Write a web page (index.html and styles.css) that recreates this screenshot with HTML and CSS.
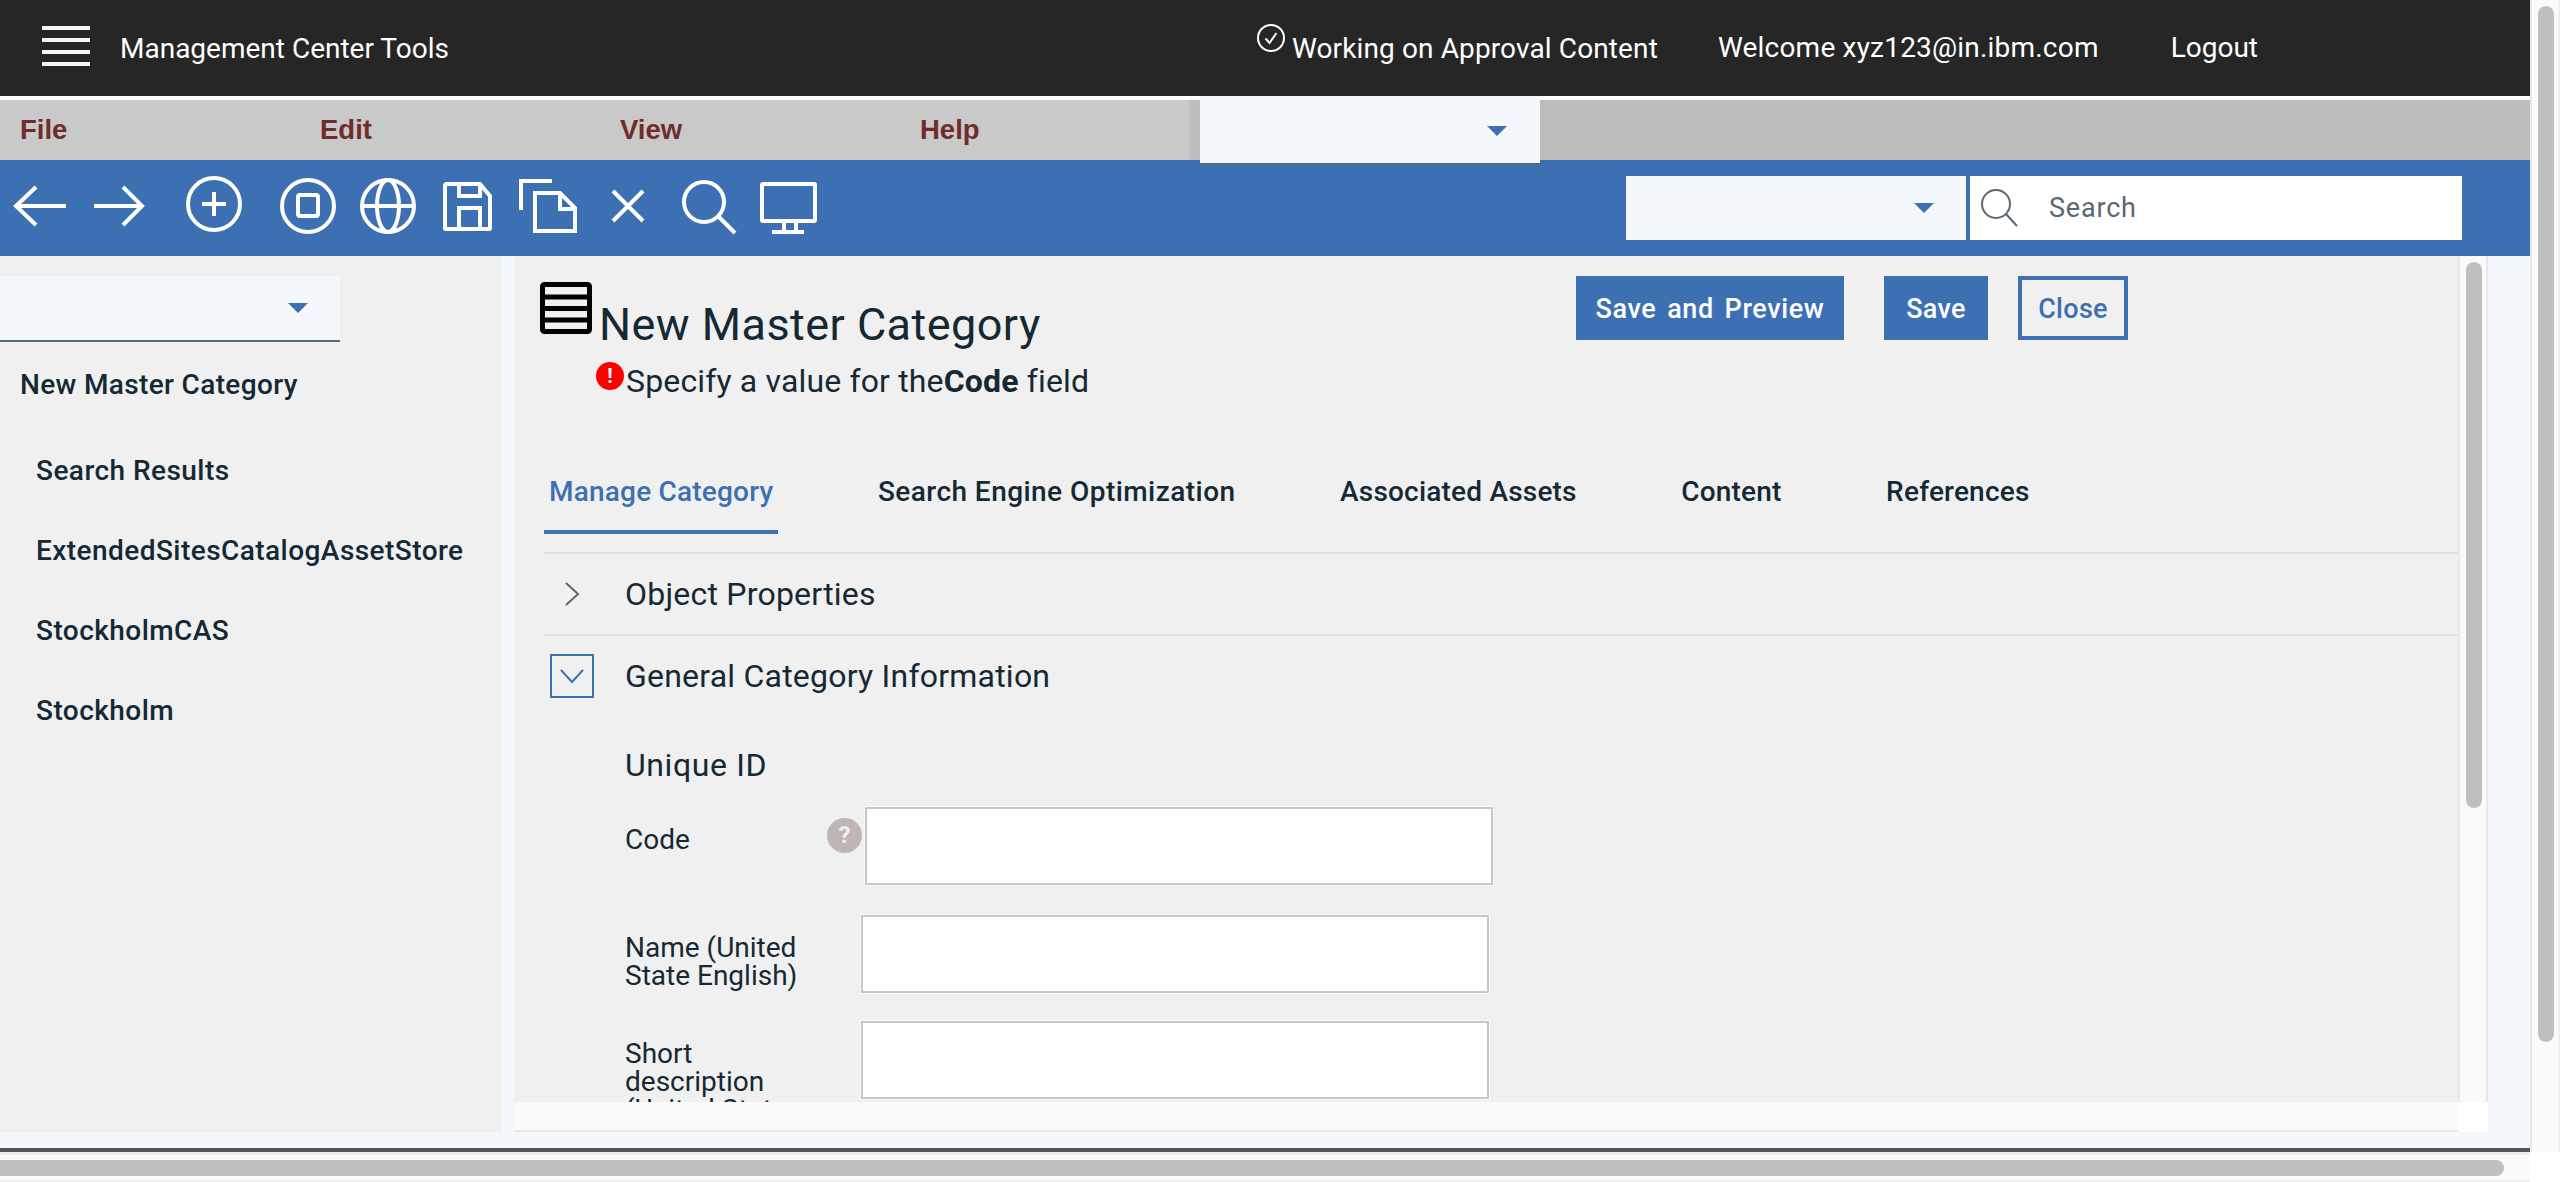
FILE: index.html
```html
<!DOCTYPE html>
<html lang="en">
<head>
<meta charset="utf-8">
<title>Management Center Tools</title>
<link rel="stylesheet" href="styles.css">
</head>
<body>
<div class="shell">
  <div class="main">
    <header class="topbar">
      <svg class="burger" width="48" height="40" viewBox="0 0 48 40"><path d="M0 0h48v4H0zM0 12h48v4H0zM0 24h48v4H0zM0 36h48v4H0z"/></svg>
      <span class="app-title">Management Center Tools</span>
      <div class="top-right">
        <span class="status">
          <svg class="status-icon" width="28" height="28" viewBox="0 0 28 28"><circle cx="14" cy="14" r="13"/><path d="M8.500 14.500l4 4.500 7-10"/></svg>
          <span class="status-text">Working on Approval Content</span>
        </span>
        <span class="welcome">Welcome xyz123@in.ibm.com</span>
        <span class="logout">Logout</span>
      </div>
    </header>
    <nav class="menubar">
      <span class="menu-item">File</span>
      <span class="menu-item">Edit</span>
      <span class="menu-item">View</span>
      <span class="menu-item">Help</span>
      <div class="menu-select"><svg class="caret" width="20" height="10" viewBox="0 0 20 10"><path d="M0 0h20L10 10z"/></svg></div>
    </nav>
    <div class="toolbar">
      <svg class="tool-icons" width="830" height="96" viewBox="0 160 830 96">
        <path d="M66 206H16M36 187L16 206l20 19"/>
        <path d="M94 206h48M123 187l19 19-19 19"/>
        <circle cx="214" cy="204" r="26"/><path d="M202 204h24M214 192v24"/>
        <circle cx="308" cy="206" r="26"/><rect x="298" y="195" width="20" height="21" rx="2"/>
        <circle cx="388" cy="206" r="26"/><ellipse cx="388" cy="206" rx="11" ry="26"/><path d="M362 206h52"/>
        <path d="M446 184h34l10 12v32a1 1 0 0 1-1 1h-43a1 1 0 0 1-1-1v-43z"/><path d="M459 184v12h21v-12M459 229v-21h21v21"/>
        <path d="M521 210v-29h31"/><path d="M535 193h25l15 15v23h-40z"/><path d="M560 193v16h15"/>
        <path d="M613 191l30 30M643 191l-30 30"/>
        <circle cx="704" cy="202" r="20"/><path d="M719 217l16 16"/>
        <rect x="762" y="184" width="53" height="37" rx="1"/><path d="M784 221v10M796 221v10M772 232h32"/>
      </svg>
      <div class="global-search">
        <div class="search-select"><svg class="caret" width="20" height="10" viewBox="0 0 20 10"><path d="M0 0h20L10 10z"/></svg></div>
        <div class="search-box">
          <svg class="search-icon" width="38" height="38" viewBox="0 0 38 38"><circle cx="16" cy="15" r="14"/><path d="M26 25l11 12"/></svg>
          <span class="search-placeholder">Search</span>
        </div>
      </div>
    </div>
    <div class="workspace">
      <aside class="sidebar">
        <div class="side-select"><svg class="caret" width="20" height="10" viewBox="0 0 20 10"><path d="M0 0h20L10 10z"/></svg></div>
        <div class="side-current">New Master Category</div>
        <div class="side-item">Search Results</div>
        <div class="side-item">ExtendedSitesCatalogAssetStore</div>
        <div class="side-item">StockholmCAS</div>
        <div class="side-item">Stockholm</div>
      </aside>
      <section class="panel">
        <div class="panel-view">
          <div class="head">
            <div class="head-text">
              <div class="title-row">
                <svg class="title-icon" width="52" height="52" viewBox="0 0 52 52"><rect x="2.500" y="2.500" width="47" height="47" rx="2"/><path d="M2 15h48M2 26.500h48M2 38h48"/></svg>
                <h1 class="title">New Master Category</h1>
              </div>
              <div class="alert">
                <span class="alert-icon">!</span>
                <span class="alert-text">Specify a value for the<b>Code</b> field</span>
              </div>
            </div>
            <div class="actions">
              <button class="btn btn-wide">Save and Preview</button>
              <button class="btn btn-save">Save</button>
              <button class="btn btn-outline">Close</button>
            </div>
          </div>
          <div class="tabs">
            <span class="tab tab-active">Manage Category</span>
            <span class="tab tab-long">Search Engine Optimization</span>
            <span class="tab">Associated Assets</span>
            <span class="tab">Content</span>
            <span class="tab">References</span>
          </div>
          <div class="acc-row acc-first">
            <span class="acc-toggle"><svg class="chev" width="16" height="24" viewBox="0 0 16 24"><path d="M2 1l12 11L2 23"/></svg></span>
            <span class="acc-label">Object Properties</span>
          </div>
          <div class="acc-row acc-open">
            <span class="acc-toggle acc-boxed"><svg class="chev chev-blue" width="24" height="16" viewBox="0 0 24 16"><path d="M1 2l11 12L23 2"/></svg></span>
            <span class="acc-label">General Category Information</span>
          </div>
          <div class="form">
            <h2 class="form-heading">Unique ID</h2>
            <div class="field field-code">
              <label class="field-label">Code</label>
              <span class="help">?</span>
              <input class="field-input" type="text">
            </div>
            <div class="field">
              <label class="field-label">Name (United State English)</label>
              <input class="field-input" type="text">
            </div>
            <div class="field field-last">
              <label class="field-label">Short description (United State English)</label>
              <input class="field-input" type="text">
            </div>
          </div>
        </div>
        <div class="inner-vscroll"><div class="inner-vthumb"></div></div>
        <div class="inner-hscroll"></div>
        <div class="inner-corner"></div>
      </section>
    </div>
  </div>
  <div class="vscroll"><div class="vthumb"></div></div>
</div>
<div class="bottom">
  <div class="hscroll"><div class="hthumb"></div></div>
</div>
</body>
</html>
```
FILE: styles.css
```css
* { box-sizing: border-box; }
html, body { margin: 0; padding: 0; }
body {
  width: 2560px;
  height: 1182px;
  overflow: hidden;
  background: #fff;
  font-family: Roboto, "Noto Sans", sans-serif;
  color: #152935;
}
.shell { display: flex; height: 1152px; }
.main { width: 2530px; height: 1152px; display: flex; flex-direction: column; }

.topbar {
  height: 100px;
  flex: none;
  background: #262626;
  border-bottom: 4px solid #fff;
  display: flex;
  align-items: center;
  padding: 0 272px 0 42px;
  color: #fff;
  font-size: 28px;
}
.burger { fill: #f4f4f4; flex: none; margin-right: 30px; margin-top: -4px; }
.app-title { margin-top: 0; }
.top-right { margin-left: auto; display: flex; align-items: center; margin-top: -1px; }
.status { display: flex; align-items: flex-start; margin-right: 60px; }
.status-icon { fill: none; stroke: #fff; stroke-width: 2; margin: -6px 7px 0 0; }
.status-text { margin-top: 2px; letter-spacing: 0.12px; }
.welcome { margin-right: 72px; letter-spacing: 0.2px; }

.menubar {
  height: 60px;
  flex: none;
  background: linear-gradient(90deg, #c9c9c9 0, #c9c9c9 47%, #bdbdbd 47%, #bdbdbd 100%);
  position: relative;
  display: flex;
  align-items: center;
  padding-left: 20px;
  font-family: "Liberation Sans", Arial, sans-serif;
  font-weight: 700;
  font-size: 27.500px;
  color: #702c2c;
}
.menu-item { width: 300px; }
.menu-select {
  position: absolute;
  left: 1200px;
  top: -4px;
  width: 340px;
  height: 69px;
  background: #f4f7fb;
  border-bottom: 2px solid #5a6872;
  z-index: 2;
}
.caret { fill: #3d70b2; display: block; }
.menu-select .caret { position: absolute; left: 287px; top: 30px; }

.toolbar {
  height: 96px;
  flex: none;
  background: #3d70b2;
  display: flex;
  padding-right: 68px;
  position: relative;
}
.tool-icons { fill: none; stroke: #fff; stroke-width: 4; flex: none; }
.global-search { margin-left: auto; margin-top: 16px; height: 64px; display: flex; gap: 4px; }
.search-select {
  width: 340px;
  background: #f4f7fb;
  display: flex;
  align-items: center;
  justify-content: flex-end;
  padding-right: 32px;
}
.search-box {
  width: 492px;
  background: #fff;
  display: flex;
  align-items: center;
  padding-left: 10px;
}
.search-icon { fill: none; stroke: #5a6872; stroke-width: 2; margin-right: 31px; }
.search-placeholder { font-size: 27px; color: #5a6872; letter-spacing: 0.8px; }

.workspace {
  flex: 1;
  min-height: 0;
  background: #f4f7fb;
  border-bottom: 4px solid #555;
  display: flex;
  align-items: flex-start;
}
.sidebar {
  width: 502px;
  height: 876px;
  flex: none;
  background: #f0f0f0;
  padding-top: 20px;
}
.side-select {
  width: 340px;
  height: 66px;
  background: #f4f7fb;
  border-bottom: 2px solid #5a6872;
  display: flex;
  align-items: center;
  justify-content: flex-end;
  padding-right: 32px;
}
.side-current {
  font-size: 28px;
  font-weight: 500;
  line-height: 32px;
  letter-spacing: 0.35px;
  padding: 0 0 6px 20px;
  margin-top: 27px;
}
.side-item {
  font-size: 28px;
  font-weight: 500;
  line-height: 32px;
  letter-spacing: 0.45px;
  padding-left: 36px;
  margin-top: 48px;
}

.panel {
  width: 1974px;
  height: 876px;
  flex: none;
  margin-left: 12px;
  display: grid;
  grid-template-columns: 1944px 30px;
  grid-template-rows: 846px 30px;
}
.panel-view {
  background: #f0f0f0;
  overflow: hidden;
  padding-left: 30px;
  border-bottom: 2px solid #e8e8e8;
  height: 848px;
}
.inner-vscroll {
  background: #fafafa;
  border-left: 2px solid #e8e8e8;
  border-right: 2px solid #e8e8e8;
  padding: 6px 4px 0 6px;
  height: 846px;
}
.inner-vthumb { width: 16px; height: 546px; background: #bfbfbf; border-radius: 8px; }
.inner-hscroll { background: #fafafa; border-bottom: 2px solid #e8e8e8; }
.inner-corner { background: #fff; }

.head {
  height: 198px;
  display: flex;
  align-items: flex-start;
  padding: 20px 330px 0 0;
}
.head-text { margin-left: -4px; }
.title-row { display: flex; align-items: flex-start; }
.title-icon { fill: none; stroke: #000; stroke-width: 5; margin-top: 6px; flex: none; margin-right: 7px; }
.title { margin: 23px 0 0; font-size: 45px; font-weight: 400; line-height: 52px; letter-spacing: 0.45px; }
.alert { display: flex; align-items: flex-start; margin: 0 0 0 56px; padding-top: 11px; }
.alert-icon {
  width: 28px;
  height: 28px;
  border-radius: 50%;
  background: #f00;
  color: #fff;
  font-size: 20px;
  font-weight: 700;
  line-height: 28px;
  text-align: center;
  flex: none;
  margin-right: 2px;
}
.alert-text { font-size: 32px; line-height: 36px; margin-top: 1px; letter-spacing: 0.15px; }
.alert-text b { font-weight: 700; }
.actions { margin-left: auto; display: flex; }
.btn {
  height: 64px;
  font: 500 27px Roboto, "Noto Sans", sans-serif;
  background: #3d70b2;
  color: #fff;
  border: 0;
  padding: 2px 0 0;
  letter-spacing: 0.3px;
}
.btn-wide { width: 268px; margin-right: 40px; letter-spacing: 0.6px; word-spacing: 3.500px; }
.btn-save { width: 104px; margin-right: 30px; }
.btn-outline { width: 110px; background: transparent; border: 4px solid #3d70b2; color: #3d70b2; }

.tabs { height: 80px; display: flex; gap: 94.500px; }
.tab {
  font-size: 28px;
  font-weight: 500;
  letter-spacing: 0.2px;
  padding: 21px 5px 0;
  height: 80px;
}
.tab-long { letter-spacing: 0.45px; }
.tab-active { color: #3d70b2; border-bottom: 4px solid #3d70b2; }

.acc-row { display: flex; align-items: center; border-top: 2px solid #dfe3e6; height: 82px; }
.acc-first { margin-top: 18px; }
.acc-toggle { width: 44px; height: 44px; margin-left: 6px; display: flex; align-items: center; justify-content: center; flex: none; }
.acc-boxed { border: 2px solid #3d70b2; }
.chev { fill: none; stroke: #5a6872; stroke-width: 2; }
.chev-blue { stroke: #3d70b2; }
.acc-label { font-size: 32px; margin-left: 31px; letter-spacing: 0.22px; }

.form { padding-left: 81px; }
.form-heading { margin: 29px 0 22px; font-size: 32px; font-weight: 400; line-height: 40px; letter-spacing: 0.6px; }
.field { display: flex; align-items: flex-start; margin-bottom: 28px; }
.field-code { margin-bottom: 30px; }
.field-label { width: 236px; font-size: 28px; line-height: 28px; padding: 19px 40px 0 0; flex: none; }
.field-code .field-label { width: 202px; padding-right: 0; }
.help {
  width: 35px;
  height: 35px;
  border-radius: 50%;
  background: #bfb5b5;
  color: #f0f0f0;
  font-size: 24px;
  font-weight: 700;
  line-height: 35px;
  text-align: center;
  margin: 11px 3px 0 0;
  flex: none;
}
.field-input {
  width: 628px;
  height: 78px;
  background: #fff;
  border: 2px solid #c8c8c8;
  outline: 1px solid #fafafa;
  outline-offset: 0;
  border-radius: 0;
  padding: 0;
}

.vscroll {
  width: 30px;
  height: 1152px;
  background: #fafafa;
  border-left: 2px solid #e8e8e8;
  border-right: 2px solid #efefef;
  padding: 6px 0 0 6px;
}
.vthumb { width: 16px; height: 1036px; background: #bfbfbf; border-radius: 8px; }
.bottom { height: 30px; }
.hscroll {
  width: 2530px;
  height: 30px;
  background: #fafafa;
  border-top: 3px solid #efefef;
  border-bottom: 2px solid #efefef;
  padding-top: 5px;
}
.hthumb { width: 2504px; height: 16px; background: #bfbfbf; border-radius: 0 8px 8px 0; }
```
